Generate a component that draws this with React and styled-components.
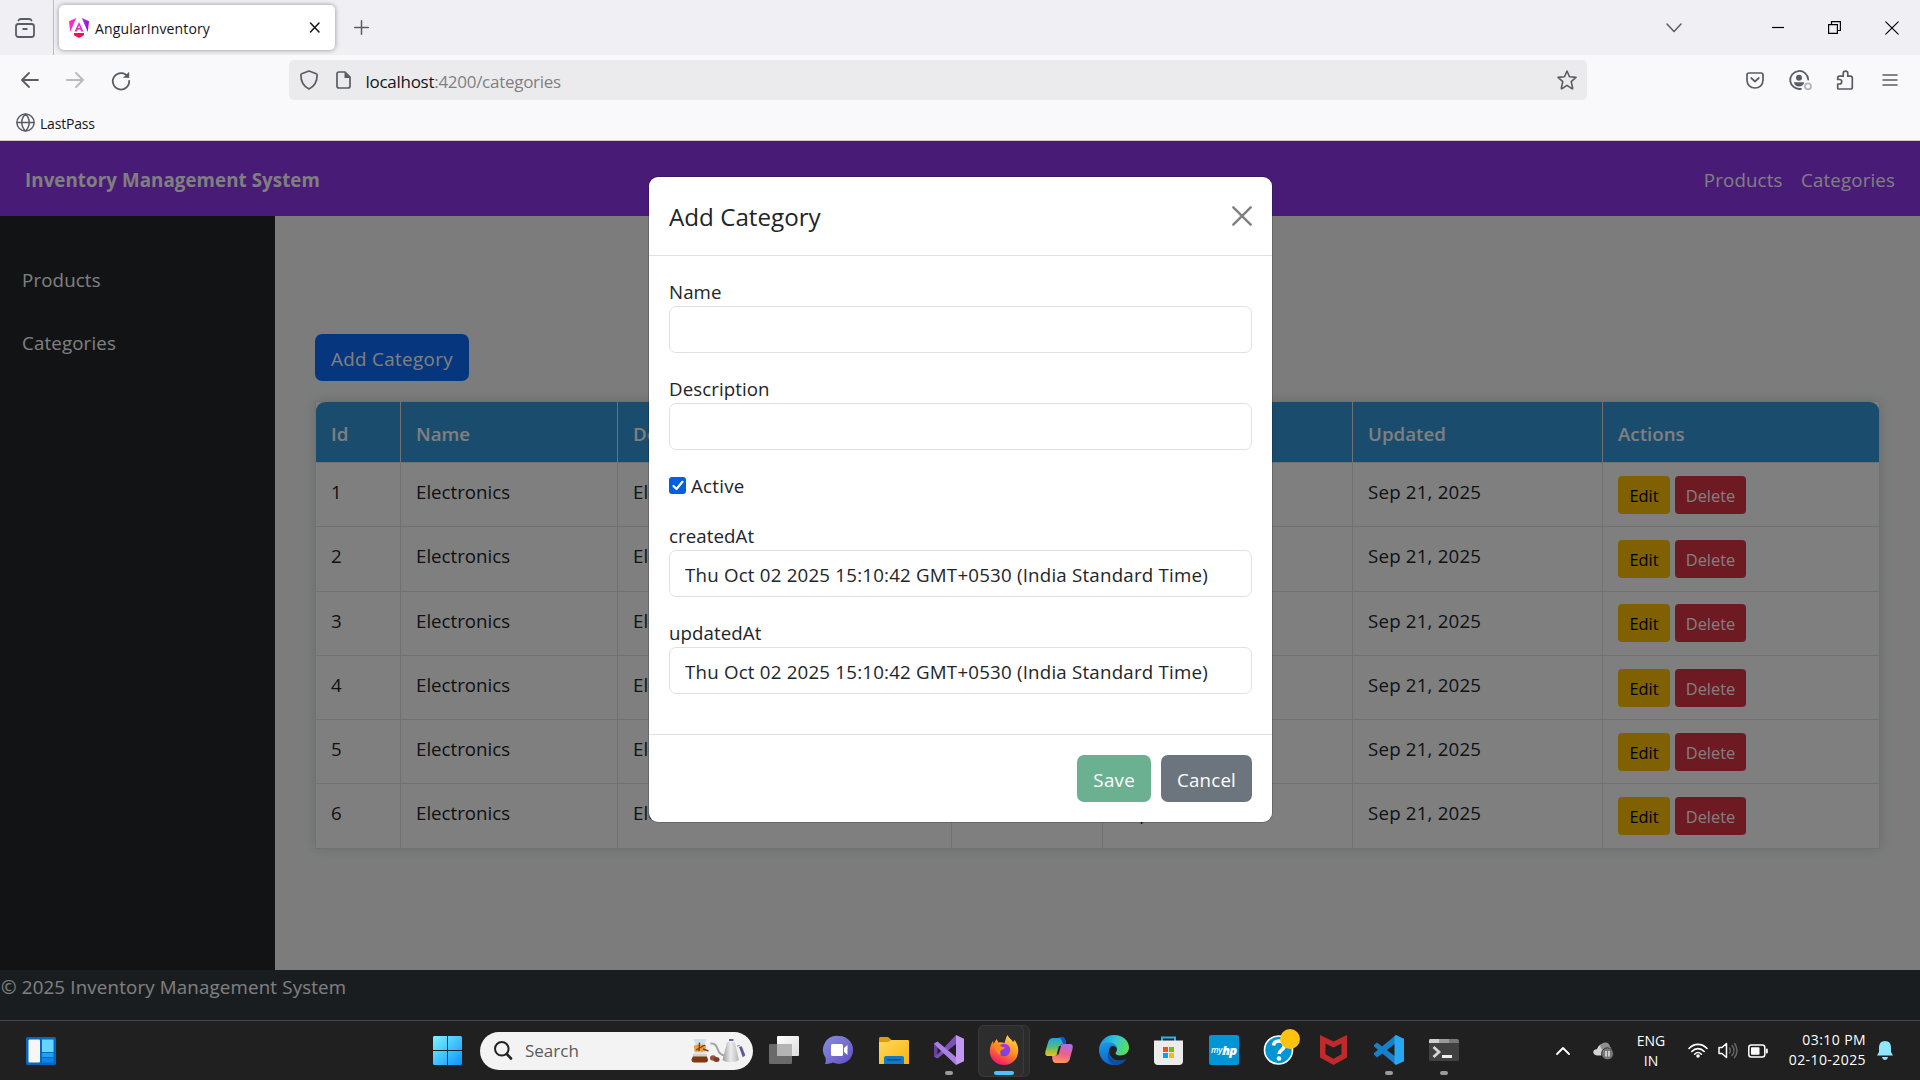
import React from "react";
import styled, { createGlobalStyle } from "styled-components";

const GlobalStyle = createGlobalStyle`
  *, *::before, *::after { box-sizing: border-box; }
  body {
    margin: 0;
    width: 1920px;
    height: 1080px;
    overflow: hidden;
    font-family: "Open Sans", "Noto Sans", sans-serif;
    font-size: 18.7px;
    line-height: 28px;
    color: #212529;
  }
  button, input { font-family: inherit; }
`;

const Screen = styled.div`
  width: 1920px;
  height: 1080px;
  display: flex;
  flex-direction: column;
  overflow: hidden;
`;

/* ---------- Browser chrome ---------- */

const TabStrip = styled.div`
  height: 55px;
  flex: none;
  display: flex;
  align-items: center;
  background: #f0eff4;
  color: #5b5b66;
`;

const TabsOverview = styled.div`
  width: 54px;
  height: 55px;
  padding-right: 3px;
  border-right: 1px solid #bcbbc3;
  display: flex;
  align-items: center;
  justify-content: center;
`;

const Tab = styled.div`
  width: 276px;
  height: 45px;
  margin: 0 19px 0 5px;
  padding: 0 14px 0 10px;
  display: flex;
  align-items: center;
  border-radius: 5px;
  background: #fff;
  box-shadow: 0 0 5px rgba(0, 0, 0, 0.4);
  color: #15141a;
`;

const TabTitle = styled.span`
  flex: 1;
  margin: 2px 0 0 6px;
  font-size: 14px;
  letter-spacing: 0.14px;
  line-height: 20px;
`;

const WindowControls = styled.div`
  display: flex;
  margin-left: auto;
  color: #000;
`;

const ControlCell = styled.div`
  width: ${(p) => p.$width || 57}px;
  margin-right: ${(p) => p.$after || 0}px;
  display: flex;
  align-items: center;
  justify-content: center;
`;

const Toolbar = styled.div`
  height: 50px;
  flex: none;
  display: flex;
  align-items: center;
  padding: 0 8px 0 7px;
  background: #f9f9fb;
  color: #5b5b66;
`;

const ToolCell = styled.div`
  width: 45px;
  height: 40px;
  display: flex;
  align-items: center;
  justify-content: center;
  opacity: ${(p) => (p.$dim ? 0.4 : 1)};
`;

const AddressBar = styled.div`
  width: 1298px;
  height: 40px;
  margin-left: 147px;
  margin-right: auto;
  padding: 0 10px 0 11px;
  display: flex;
  align-items: center;
  gap: 17px;
  border-radius: 5px;
  background: #ebebed;
`;

const Address = styled.span`
  flex: 1;
  margin: 3px 0 0 -4.5px;
  font-size: 17px;
  letter-spacing: -0.28px;
  color: #7f7f85;
  b { font-weight: 400; color: #15141a; }
`;

const Bookmarks = styled.div`
  height: 36px;
  flex: none;
  display: flex;
  align-items: center;
  gap: 5px;
  padding-left: 16px;
  border-bottom: 1px solid #cccccf;
  background: #f9f9fb;
  font-size: 14px;
  letter-spacing: -0.2px;
  line-height: 20px;
  color: #15141a;
`;

const BookmarkLabel = styled.span`
  padding-top: 2px;
`;

/* ---------- Web page ---------- */

const Page = styled.div`
  position: relative;
  height: 879px;
  flex: none;
  display: flex;
  flex-direction: column;
  background: #f8f9fa;
`;

const NavBar = styled.nav`
  height: 75px;
  flex: none;
  padding: 3px 25px 0;
  display: flex;
  align-items: center;
  justify-content: space-between;
  background: #9036ee;
  color: #fff;
`;

const Brand = styled.span`
  font-weight: 700;
  letter-spacing: 0.09px;
`;

const NavLinks = styled.div`
  display: flex;
  gap: 18.5px;
  letter-spacing: 0.15px;
`;

const Middle = styled.div`
  height: 754px;
  flex: none;
  display: flex;
`;

const SideBar = styled.aside`
  width: 275px;
  padding: 50px 22px 0;
  display: flex;
  flex-direction: column;
  gap: 35px;
  background: #232629;
  color: #fff;
  letter-spacing: 0.15px;
`;

const Content = styled.main`
  flex: 1;
  padding: 118px 40px 0;
  display: flex;
  flex-direction: column;
  align-items: flex-start;
`;

const Button = styled.button`
  height: 47px;
  padding: 3px 16px 0;
  border: 0;
  border-radius: 7px;
  font-size: 18.7px;
  letter-spacing: ${(p) => p.$spacing || 0.2}px;
  line-height: 28px;
  color: #fff;
  background: ${(p) => p.$bg};
`;

const Table = styled.div`
  width: 1565px;
  margin-top: 20px;
  border: 1px solid #dee2e6;
  border-bottom: 0;
  background: #fff;
  box-shadow: 0 0 12px rgba(0, 0, 0, 0.14);
`;

const Row = styled.div`
  display: grid;
  grid-template-columns: 85px 217px 334px 151px 250px 250px 1fr;
  height: ${(p) => (p.$head ? 61 : 64.25)}px;
  background: ${(p) => (p.$head ? "#3498db" : "#fff")};
  border-radius: ${(p) => (p.$head ? "9px 9px 0 0" : 0)};
  color: ${(p) => (p.$head ? "#fff" : "#212529")};
  font-weight: ${(p) => (p.$head ? 600 : 400)};
  border-bottom: 1px solid #dee2e6;
`;

const Cell = styled.div`
  padding: ${(p) => p.$top || 15}px 15px 0;
  border-right: 1px solid #dee2e6;
  letter-spacing: ${(p) => p.$spacing || 0}px;
  &:last-child { border-right: 0; }
`;

const Actions = styled.div`
  display: flex;
  gap: 5px;
  padding: 12.75px 15px 0;
`;

const SmallButton = styled.button`
  width: ${(p) => p.$width}px;
  height: 38px;
  padding: 2px 0 0;
  border: 0;
  border-radius: 4px;
  font-size: 16.4px;
  line-height: 26px;
  color: ${(p) => p.$color};
  background: ${(p) => p.$bg};
`;

const PageFooter = styled.footer`
  flex: 1;
  padding: 3px 1px 0;
  background: #343b41;
  color: #fff;
  letter-spacing: 0.18px;
`;

/* ---------- Modal ---------- */

const Backdrop = styled.div`
  position: absolute;
  inset: 0;
  padding: 36px 0 0 649px;
  background: rgba(0, 0, 0, 0.5);
`;

const Dialog = styled.div`
  width: 623px;
  height: 645px;
  display: flex;
  flex-direction: column;
  border-radius: 9px;
  background: #fff;
  box-shadow: 0 0 0 1px rgba(0, 0, 0, 0.175);
`;

const DialogHeader = styled.div`
  height: 79px;
  padding: 0 20px;
  display: flex;
  align-items: center;
  justify-content: space-between;
  border-bottom: 1px solid #dee2e6;
`;

const DialogTitle = styled.h5`
  margin: 0;
  padding-top: 2px;
  font-size: 24.2px;
  line-height: 34px;
  font-weight: 400;
`;

const DialogBody = styled.div`
  flex: 1;
  padding: 22px 20px 0;
`;

const Field = styled.label`
  display: flex;
  flex-direction: column;
  height: ${(p) => (p.$last ? 75 : 97)}px;
  letter-spacing: 0.08px;
`;

const Input = styled.input`
  width: 583px;
  height: 47px;
  padding: 1px 15px 0;
  border: 1px solid #dee2e6;
  border-radius: 7px;
  font-size: 18.7px;
  letter-spacing: 0.215px;
  color: #212529;
  outline: 0;
`;

const CheckRow = styled.label`
  display: flex;
  gap: 5px;
  height: 50px;
  letter-spacing: 0.25px;
`;

const CheckMark = styled.span`
  width: 17px;
  height: 17px;
  margin-top: 5px;
  display: flex;
  align-items: center;
  justify-content: center;
  border-radius: 3px;
  background: #0060df;
`;

const DialogFooter = styled.div`
  height: 88px;
  padding: 0 20px;
  display: flex;
  align-items: center;
  justify-content: flex-end;
  gap: 10px;
  border-top: 1px solid #dee2e6;
`;

/* ---------- Taskbar ---------- */

const TaskBar = styled.div`
  height: 60px;
  flex: none;
  display: flex;
  align-items: center;
  padding-left: 26px;
  border-top: 1px solid #444647;
  background: #202020;
  color: #fff;
`;

const StartButton = styled.div`
  display: flex;
  margin: 0 18px 0 377px;
`;

const SearchBox = styled.div`
  width: 273px;
  height: 38px;
  padding: 0 8px 0 14px;
  display: flex;
  align-items: center;
  border-radius: 19px;
  background: #f3f3f3;
  color: #5a5a5a;
  font-size: 17px;
`;

const SearchLabel = styled.span`
  flex: 1;
  padding: 1px 0 0 13px;
`;

const Apps = styled.div`
  display: flex;
  margin-left: 3px;
`;

const AppSlot = styled.div`
  width: 55px;
  display: flex;
  justify-content: center;
`;

const AppFace = styled.div`
  width: ${(p) => (p.$active ? 44 : 50)}px;
  height: 50px;
  margin-right: ${(p) => (p.$active ? 6 : 0)}px;
  padding: 5px 0 0 ${(p) => (p.$active ? 6 : 0)}px;
  display: flex;
  flex-direction: column;
  align-items: center;
  border-radius: 5px;
  background: ${(p) => (p.$active ? "#2d2d2d" : "transparent")};
  box-shadow: ${(p) => (p.$active ? "0 0 0 1px #3a3a3a, 6px 0 0 0 #2b2b2b, 6px 0 0 1px #363636" : "none")};
`;

const AppIcon = styled.div`
  height: 40px;
  padding-bottom: 1px;
  display: flex;
  align-items: center;
`;

const Indicator = styled.div`
  width: ${(p) => (p.$active ? 20 : 8)}px;
  height: 4px;
  border-radius: 2px;
  background: ${(p) => (p.$active ? "#4cc2ff" : "#9a9a9a")};
`;

const Tray = styled.div`
  margin-left: auto;
  display: flex;
  align-items: center;
  padding-right: 27px;
`;

const TrayText = styled.div`
  width: ${(p) => p.$width}px;
  margin: ${(p) => p.$margin};
  text-align: ${(p) => p.$align};
  font-size: 14px;
  letter-spacing: ${(p) => p.$spacing || 0}px;
  line-height: 20px;
`;

const TrayIcon = styled.div`
  display: flex;
  margin-right: ${(p) => p.$after}px;
`;

/* ---------- Icons ---------- */

const IconFrame = styled.svg`
  display: block;
  flex: none;
  overflow: visible;
`;

const Svg = ({ w = 20, h = w, sw = 1.6, children }) => (
  <IconFrame
    width={w}
    height={h}
    viewBox={`0 0 ${w} ${h}`}
    fill="none"
    stroke="currentColor"
    strokeWidth={sw}
    strokeLinecap="round"
    strokeLinejoin="round"
  >
    {children}
  </IconFrame>
);

const Filled = ({ w = 30, h = w, children }) => (
  <IconFrame width={w} height={h} viewBox={`0 0 ${w} ${h}`}>
    {children}
  </IconFrame>
);

const Grad = ({ id, from, to, mid, x2 = 1, y2 = 1, x1 = 0, y1 = 0 }) => (
  <linearGradient id={id} x1={x1} y1={y1} x2={x2} y2={y2}>
    <stop offset="0" stopColor={from} />
    {mid && <stop offset=".5" stopColor={mid} />}
    <stop offset="1" stopColor={to} />
  </linearGradient>
);

const AngularIcon = () => (
  <Filled w={20}>
    <defs><Grad id="ng" from="#ff2fb0" to="#7a16f5" mid="#f02bd5" y2={0} /></defs>
    <path d="M7.2 0 0 3.2 1.2 14 7.2 0Z M12.8 0 20 3.2 18.8 14 12.8 0Z" fill="url(#ng)" />
    <path d="M10 4 5.6 13.6h2.3l.8-2h2.6l.8 2h2.3L10 4Zm0 3.6 1 2.4H9l1-2.4Z" fill="#ef2bc0" />
    <path d="M5 15h10v2.3L10 20l-5-2.7V15Z" fill="#f5104f" />
  </Filled>
);

const WidgetsIcon = () => (
  <Filled w={30} h={28}>
    <rect width="30" height="28" rx="1.5" fill="#0a66b8" />
    <rect x="2.5" y="2.5" width="11.5" height="23" rx="1" fill="#f6f6f6" />
    <rect x="16" y="2.5" width="11.5" height="12.5" fill="#63d6ff" />
    <rect x="16" y="16" width="11.5" height="4" fill="#1da2f8" />
    <rect x="16" y="21" width="11.5" height="4.5" fill="#0a84ee" />
  </Filled>
);

const WindowsIcon = () => (
  <Filled w={29}>
    <defs>
      <linearGradient id="win" gradientUnits="userSpaceOnUse" x1="0" y1="0" x2="29" y2="29">
        <stop offset="0" stopColor="#7df3ff" />
        <stop offset="1" stopColor="#0a94ff" />
      </linearGradient>
    </defs>
    <path d="M1 0h13v14H0V1Zm14 0h13l1 1v13H15ZM0 15h14v14H1l-1-1Zm15 0h14v13l-1 1H15Z" fill="url(#win)" />
  </Filled>
);

const CoffeeIcon = () => (
  <Filled w={54} h={25}>
    <defs><Grad id="pot" from="#9a9a9a" to="#b5b5b5" mid="#ededed" y2={0} /></defs>
    <path d="M2.5 1h13l-3.5 9 3.5 5.5H2.5L6 10Z" fill="#cfe0ea" />
    <path d="M3 7.5c4-1.5 8-1 12-.5l-.5 6c-4 1-8 1-11 .5Z" fill="#e8a040" />
    <path d="M8.5 4.5 8 13M5 12l9-5m-2 4 5.5 2" stroke="#8a3b12" strokeWidth="1.4" fill="none" />
    <path d="M3 16h12l2 5.5c0 2-1 3-3 3H3.5c-2 0-3-1-3-3Z" fill="#7a3a12" />
    <path d="M2.5 16h13l.6 2.5H1.8Z" fill="#d8cfc8" />
    <ellipse cx="22" cy="20" rx="3" ry="2.8" fill="#9b4f3c" />
    <ellipse cx="25.5" cy="21.5" rx="3" ry="2.5" fill="#7f3a2c" />
    <path d="M19.5 5.5c5-.5 6 2.5 7.5 6.5 1.3 3.5 3 5 6.5 5.5" stroke="#a2a2a2" strokeWidth="2" fill="none" />
    <path d="M36 4.5c2-1.5 6-1.500 8 0l4 17.500c-4 3-13 3-16.500 0Z" fill="url(#pot)" />
    <path d="M46 8l3-.5" stroke="#aaa" strokeWidth="1.5" />
    <path d="M38 1h4.5v2H38Z" fill="#6b63a6" />
    <path d="m48 9 2.800-.8 3.500 9-2.500 2Z" fill="#5f5796" />
  </Filled>
);

const TaskViewIcon = () => (
  <Filled w={30} h={28}>
    <defs><Grad id="tv" from="#ffffff" to="#dcdcdc" /></defs>
    <rect x="8" y="0" width="22" height="20" rx="1" fill="url(#tv)" />
    <rect x="0" y="8" width="23" height="20" rx="1" fill="#6a6a6a" />
    <path d="M8 8h15v12H8Z" fill="#b4b4b4" />
  </Filled>
);

const ChatIcon = () => (
  <Filled w={30} h={28}>
    <defs><Grad id="chat" from="#7e8fe0" to="#5a4fc4" mid="#7a6fd0" /></defs>
    <path d="M15 0a14 14 0 1 1-6 26.600C6 28 3 28 1 28c1-2 .8-4 .6-6A14 14 0 0 1 15 0Z" fill="url(#chat)" />
    <rect x="7" y="8" width="12" height="12" rx="1.5" fill="#fff" />
    <path d="m20 12 3.500-3v10L20 16Z" fill="#fff" />
  </Filled>
);

const FolderIcon = () => (
  <Filled w={30} h={27}>
    <defs><Grad id="fold" from="#ffd95a" to="#f8b312" /></defs>
    <path d="M0 1.500C0 .6.600 0 1.500 0H9l3.500 3H29l1 1v6H0Z" fill="#dd9c0b" />
    <path d="M0 5h9l3.500-2H29l1 1v23H0Z" fill="url(#fold)" />
    <path d="M5 21c0-1.300.8-2 2-2h16c1.300 0 2 .8 2 2v6H5Z" fill="#1279c9" />
    <rect x="8" y="22" width="14" height="1.6" fill="#0a4f94" />
  </Filled>
);

const VisualStudioIcon = () => (
  <Filled w={30}>
    <path d="M0 8.500 3.500 7v16L0 21.500Z" fill="#6a3f9c" />
    <path d="m0 21.500 3.500 2L22 9V0L3 20Z" fill="#7d4fbb" />
    <path d="M0 8.500 3.500 6.500 22 22v8L3.500 12.500Z" fill="#a97fe2" />
    <path d="M22 0 30 3.800v22.400L22 30Z" fill="#c298f0" />
  </Filled>
);

const FirefoxIcon = () => (
  <Filled w={30}>
    <defs>
      <Grad id="fx" from="#ffe14a" mid="#ff8a1f" to="#f5116e" x1={0.8} x2={0.3} />
      <Grad id="fx2" from="#b833e1" to="#5a4be0" x1={1} x2={0} />
    </defs>
    <path d="M18.500 0c1 3 4.500 4.500 5.500 7 1-.5 1.200-1.200 1.500-2 3 4 4.300 8 3.500 13C28 25.500 22 30 15 30 7 30 .8 24 .8 16.500.8 12 2 9 4 6l.5 3L7.500 4l2 3.500c2.500-.5 4.500 0 6 .5 1-3 1.500-6 3-8Z" fill="url(#fx)" />
    <circle cx="15" cy="15" r="6.3" fill="url(#fx2)" />
    <path d="M5.500 10.500c3-1 6-.5 7.500 1.500l3 .3c-.5 2-3 2.200-4.500 3.700-.6 1.500-.2 2.800 1 3.600-3 .6-6-1.500-7-9.100Z" fill="#ff8a1a" />
  </Filled>
);

const CopilotIcon = () => (
  <Filled w={28} h={27}>
    <defs>
      <Grad id="cp1" from="#19a5ef" mid="#58bb7a" to="#f2c40f" x2={0} />
      <Grad id="cp2" from="#b16ce8" mid="#ee5f8d" to="#ff9a55" x1={0.5} x2={0.3} />
    </defs>
    <path d="M8 1h9c2.500 0 3 1.500 3.500 3L21 7h-3c-2 0-2.700 1-3.200 3l-1.500 6c-.8 2-1.500 3-4 3H3c-3 0-3-2.500-2.500-5L3.500 4C4.500 2 6 1 8 1Z" fill="url(#cp1)" />
    <path d="M13 0h4.500c2.500 0 3 2 3.500 7h-3c-1-5-3-6-5-7Z" fill="#1b50c8" />
    <path d="M20 26h-9c-2.500 0-3-1.500-3.500-3L7 19h3c2 0 2.700-1 3.200-3l1.500-6c.8-2 1.500-3 4-3H25c3 0 3 2.500 2.500 5l-3 11C23.500 25 22 26 20 26Z" fill="url(#cp2)" />
    <path d="m16 9-2.500 8.500h-2L14 9Z" fill="#202020" />
  </Filled>
);

const EdgeIcon = () => (
  <Filled w={30}>
    <defs>
      <Grad id="ed1" from="#1d8fe8" to="#5de04f" mid="#36c6d4" y1={0.3} y2={0.6} />
      <Grad id="ed2" from="#1a9de8" to="#0b5ec4" x2={0.5} />
    </defs>
    <path d="M0 14C1 6 7 0 15 0c9 0 15 6 15 12.500 0 5-4 8-9 8-3 0-4.500-1-4.500-2.200 0-1 1.500-1.500 1.500-4C18 11 15 9 11 9 5 9 1 11 0 14Z" fill="url(#ed1)" />
    <path d="M0 14c1-4 5-6.500 10-6.500 4.500 0 8 2.500 8 6.800-.3-2-2-3.300-4-3.300-2 0-4 2-4 5.500 0 6 6 9.500 12 9 2-.2 4-1 5-1.500C24 28 20 30 15 30 6 30-.5 22.500 0 14Z" fill="url(#ed2)" />
    <path d="M10 16c-.5 7 5 10.500 11 10 2.500-.2 5-1.200 6.500-2C24.500 28.500 20 30 16 30 9 28 7.500 21 10 16Z" fill="#0c4f9c" />
  </Filled>
);

const StoreIcon = () => (
  <Filled w={29}>
    <path d="M8 6V1.500h13V6" stroke="#2cb4e8" strokeWidth="2" fill="none" />
    <path d="M0 4.500h29V25c0 2.500-1.500 4-4 4H4c-2.500 0-4-1.500-4-4Z" fill="#ececec" />
    <path d="M9 11h5v5H9Z" fill="#f25022" /><path d="M15 11h5v5h-5Z" fill="#7fba00" />
    <path d="M9 17h5v5H9Z" fill="#00a4ef" /><path d="M15 17h5v5h-5Z" fill="#ffb900" />
  </Filled>
);

const HpTile = styled.div`
  width: 30px;
  height: 30px;
  display: flex;
  align-items: center;
  justify-content: center;
  border-radius: 2px;
  background: #0096d6;
  color: #fff;
  font-size: 8.5px;
  font-weight: 600;
  font-style: italic;
  letter-spacing: -0.3px;
  b { font-size: 13px; letter-spacing: -1px; }
`;

const HelpIcon = () => (
  <Filled w={30}>
    <circle cx="14.5" cy="15" r="14" fill="#0096d6" stroke="#fff" strokeWidth="1.6" />
    <path d="M9.500 10.500c.3-3 2.500-4.500 5.500-4.500 3.200 0 5.300 1.700 5.300 4.500 0 4.500-5.300 4.500-5.300 8.500" stroke="#fff" strokeWidth="3.6" fill="none" />
    <circle cx="15" cy="23.5" r="2.3" fill="#fff" />
    <circle cx="26" cy="4" r="10" fill="#ffc20e" />
  </Filled>
);

const McAfeeIcon = () => (
  <Filled w={27} h={30}>
    <path d="m0 0 13.500 6.500L27 0v22.500L13.500 30 0 22.500Zm5.500 8.500v10.700l8 4.500 8-4.500V8.500l-8 4Z" fill="#c02a2d" fillRule="evenodd" />
  </Filled>
);

const VsCodeIcon = () => (
  <Filled w={30}>
    <path d="M0 10 3 7.500 22 22v8L0 11.500Z" fill="#1c7fc7" />
    <path d="M0 19.500 3 22.500 22 8V0L0 18Z" fill="#1580cc" />
    <path d="M22 0 30 3.800v22.400L22 30l-1.500-1.500v-27Z" fill="#2aa7f2" />
  </Filled>
);

const TerminalIcon = () => (
  <Filled w={30} h={22}>
    <rect width="30" height="22" rx="1.5" fill="#414141" />
    <path d="M0 1.500C0 .6.600 0 1.500 0H10v4H0Z" fill="#cfcfcf" />
    <path d="M10 0h10v4H10Z" fill="#9b9b9b" /><path d="M20 0h8.500l1.500 1.500V4H20Z" fill="#777" />
    <path d="m4.500 8 5.500 5-5.500 5" stroke="#d5d5d5" strokeWidth="2.8" fill="none" />
    <path d="M13 16h10v3H13Z" fill="#eee" />
  </Filled>
);

const apps = [
  { name: "taskview", icon: <TaskViewIcon /> },
  { name: "chat", icon: <ChatIcon /> },
  { name: "files", icon: <FolderIcon /> },
  { name: "vs", icon: <VisualStudioIcon />, running: true },
  { name: "firefox", icon: <FirefoxIcon />, running: true, active: true },
  { name: "copilot", icon: <CopilotIcon /> },
  { name: "edge", icon: <EdgeIcon /> },
  { name: "store", icon: <StoreIcon /> },
  { name: "hp", icon: <HpTile>my<b>hp</b></HpTile> },
  { name: "help", icon: <HelpIcon /> },
  { name: "mcafee", icon: <McAfeeIcon /> },
  { name: "vscode", icon: <VsCodeIcon />, running: true },
  { name: "terminal", icon: <TerminalIcon />, running: true },
];

const ids = [1, 2, 3, 4, 5, 6];
const now = "Thu Oct 02 2025 15:10:42 GMT+0530 (India Standard Time)";

const Browser = () => (
  <>
    <TabStrip>
      <TabsOverview>
        <Svg w={20} h={20} sw={1.8}>
          <rect x="1" y="6" width="18" height="13" rx="2.5" />
          <path d="M3.500 2.500C4 1.300 4.800 1 6 1h8c1.200 0 2 .3 2.500 1.500M8.200 11h3.600" />
        </Svg>
      </TabsOverview>
      <Tab>
        <AngularIcon />
        <TabTitle>AngularInventory</TabTitle>
        <Svg w={12} h={12} sw={1.5}><path d="m1.500 1 8.500 9M10 1 1.500 10" /></Svg>
      </Tab>
      <Svg w={15} h={15} sw={1.5}><path d="M7.500.7v13.600M.7 7.500h13.600" /></Svg>
      <WindowControls>
        <ControlCell $width={28} $after={61}>
          <Svg w={16} h={10} sw={1.5}><path d="m1 1 7 7.500L15 1" stroke="#5b5b66" /></Svg>
        </ControlCell>
        <ControlCell><Svg w={12} h={4} sw={1.2}><path d="M0 1.500h12" strokeLinecap="butt" /></Svg></ControlCell>
        <ControlCell>
          <Svg w={13} h={13} sw={1.2}>
            <path d="M.6 3.600h8.800v8.800H.6ZM3.500 3.500V.6h8.900v8.900H9.500" strokeLinejoin="miter" />
          </Svg>
        </ControlCell>
        <ControlCell><Svg w={14} h={14} sw={1.2}><path d="m.8.800 12.400 12.400M13.200.8.800 13.200" /></Svg></ControlCell>
      </WindowControls>
    </TabStrip>
    <Toolbar>
      <ToolCell><Svg w={18} h={16} sw={1.8}><path d="M17 8H1.500M8 1 1 8l7 7" /></Svg></ToolCell>
      <ToolCell $dim><Svg w={18} h={16} sw={1.8}><path d="M1 8h15.500M10 1l7 7-7 7" /></Svg></ToolCell>
      <ToolCell>
        <Svg w={18} h={19} sw={1.8}>
          <path d="M17 6A8.200 8.200 0 1 0 18.200 9.800" />
          <path d="M12 6.700h6.200V.8Z" fill="currentColor" stroke="none" />
        </Svg>
      </ToolCell>
      <AddressBar>
        <Svg w={18} h={20} sw={1.7}>
          <path d="M9 1 16.300 3.800c.6.200.8.600.8 1.200C17.200 11 15 16 9 19 3 16 .8 11 .9 5c0-.6.200-1 .8-1.200Z" />
        </Svg>
        <Svg w={18} h={18} sw={1.7}>
          <path d="M4 1h6l5 5v9c0 1.200-.8 2-2 2H4c-1.200 0-2-.8-2-2V3c0-1.200.8-2 2-2Z" />
          <path d="M9.500 1v6h6Z" fill="currentColor" stroke="none" />
        </Svg>
        <Address><b>localhost</b>:4200/categories</Address>
        <Svg w={20} h={20} sw={1.6}>
          <path d="m10 1 2.500 5.700 6.500.700-4.800 4.200 1.500 6.500c.1.600-.3.800-.8.500L10 15.300l-4.900 3.300c-.5.300-.9.100-.8-.5l1.500-6.500L1 7.400l6.500-.7Z" />
        </Svg>
      </AddressBar>
      <ToolCell>
        <Svg w={18} h={17} sw={1.7}>
          <path d="M3 1h12c1.200 0 2 .8 2 2v5c0 5-3.500 8-8 8S1 13 1 8V3c0-1.200.8-2 2-2ZM5.200 6 9 9.500 12.800 6" />
        </Svg>
      </ToolCell>
      <ToolCell>
        <Svg w={21} h={20} sw={1.8}>
          <path d="M19.200 9.500A9 9 0 1 0 12 18.800" />
          <circle cx="10" cy="7.7" r="3" fill="currentColor" stroke="none" />
          <path d="M4.800 12.300h10.400c-.8 3-2.500 4.200-5.200 4.200s-4.400-1.200-5.200-4.200Z" fill="currentColor" stroke="none" />
          <circle cx="19" cy="16.3" r="3" stroke="#b5b5bb" />
        </Svg>
      </ToolCell>
      <ToolCell>
        <Svg w={18} h={20} sw={1.7}>
          <path d="M2.500 19h12c1 0 1.800-.7 1.800-1.800V8c0-1-.8-1.800-1.800-1.800h-2.700V3.400c0-3-4.600-3-4.600 0v2.800H3.500C2.300 6.200 1.700 7 1.700 8v1.500h1.800c3 0 3 4.500 0 4.500H1.700v4.200c0 .5.300.8.800.8Z" />
        </Svg>
      </ToolCell>
      <ToolCell><Svg w={16} h={14} sw={1.5}><path d="M1 2h14M1 7h14M1 12h14" /></Svg></ToolCell>
    </Toolbar>
    <Bookmarks>
      <Svg w={19} h={19} sw={1.5}>
        <circle cx="9.5" cy="9.5" r="8.6" stroke="#5b5b66" />
        <path d="M1 9.500h17M9.500 1c-5 5-5 12 0 17M9.500 1c5 5 5 12 0 17" stroke="#5b5b66" />
      </Svg>
      <BookmarkLabel>LastPass</BookmarkLabel>
    </Bookmarks>
  </>
);

const CategoryDialog = () => (
  <Backdrop>
    <Dialog>
      <DialogHeader>
        <DialogTitle>Add Category</DialogTitle>
        <Svg w={20} h={20} sw={2.4}><path d="m1.300 1.300 17.400 17.400M18.700 1.300 1.300 18.700" stroke="#808080" /></Svg>
      </DialogHeader>
      <DialogBody>
        <Field>Name<Input /></Field>
        <Field>Description<Input /></Field>
        <CheckRow>
          <CheckMark><Svg w={12} h={11} sw={2.2}><path d="m1.500 6 3 3L10.500 1.800" stroke="#fff" /></Svg></CheckMark>
          Active
        </CheckRow>
        <Field>createdAt<Input readOnly value={now} /></Field>
        <Field $last>updatedAt<Input readOnly value={now} /></Field>
      </DialogBody>
      <DialogFooter>
        <Button $bg="#6cb092" $spacing={0.3}>Save</Button>
        <Button $bg="#6c757d">Cancel</Button>
      </DialogFooter>
    </Dialog>
  </Backdrop>
);

const InventoryPage = () => (
  <Page>
    <NavBar>
      <Brand>Inventory Management System</Brand>
      <NavLinks><span>Products</span><span>Categories</span></NavLinks>
    </NavBar>
    <Middle>
      <SideBar><span>Products</span><span>Categories</span></SideBar>
      <Content>
        <Button $bg="#0d6efd" $spacing={0.39}>Add Category</Button>
        <Table>
          <Row $head>
            {["Id", "Name", "Description", "Active", "Created", "Updated", "Actions"].map((h) => (
              <Cell key={h} $top={18}>{h}</Cell>
            ))}
          </Row>
          {ids.map((id) => (
            <Row key={id}>
              <Cell>{id}</Cell>
              <Cell>Electronics</Cell>
              <Cell>Electronics</Cell>
              <Cell>true</Cell>
              <Cell $spacing={0.2}>Sep 21, 2025</Cell>
              <Cell $spacing={0.2}>Sep 21, 2025</Cell>
              <Actions>
                <SmallButton $width={52} $bg="#ffc107" $color="#000">Edit</SmallButton>
                <SmallButton $width={71} $bg="#dc3545" $color="#fff">Delete</SmallButton>
              </Actions>
            </Row>
          ))}
        </Table>
      </Content>
    </Middle>
    <PageFooter>© 2025 Inventory Management System</PageFooter>
    <CategoryDialog />
  </Page>
);

const WindowsTaskBar = () => (
  <TaskBar>
    <WidgetsIcon />
    <StartButton><WindowsIcon /></StartButton>
    <SearchBox>
      <Svg w={18} h={19} sw={2}><circle cx="7.8" cy="7.8" r="6.8" stroke="#222" /><path d="m12.800 13 4.200 4.500" stroke="#222" strokeWidth="2.6" /></Svg>
      <SearchLabel>Search</SearchLabel>
      <CoffeeIcon />
    </SearchBox>
    <Apps>
      {apps.map((a) => (
        <AppSlot key={a.name}>
          <AppFace $active={a.active}>
            <AppIcon>{a.icon}</AppIcon>
            {a.running && <Indicator $active={a.active} />}
          </AppFace>
        </AppSlot>
      ))}
    </Apps>
    <Tray>
      <TrayIcon $after={23}><Svg w={14} h={8} sw={1.8}><path d="m1 7 6-6 6 6" /></Svg></TrayIcon>
      <TrayIcon $after={17}>
        <Filled w={21} h={18}>
          <path d="M4 13.500c-5-1-5-6 0-6.500C6 1 13 0 15.500 4.500c3 .5 4 4 2.500 6L8 13.500Z" fill="#d2d2d2" />
          <path d="M7 4c2-5 10-5 10 1.500L9 8Z" fill="#8f8f8f" />
          <circle cx="14.5" cy="11.8" r="6" fill="#777" stroke="#202020" strokeWidth=".8" />
          <path d="M13 9v5.500M16 9v5.500" stroke="#eee" strokeWidth="1.4" />
        </Filled>
      </TrayIcon>
      <TrayText $width={40} $align="center" $margin="0 17px 0 0">ENG<br />IN</TrayText>
      <TrayIcon $after={10}>
        <Svg w={20} h={15} sw={1.6}>
          <path d="M1 5.500c5-5.500 13-5.500 18 0M3.800 8.500c3.500-3.800 8.900-3.800 12.400 0M6.600 11.200c2-2 4.800-2 6.800 0" />
          <circle cx="10" cy="13" r="1.8" fill="#fff" stroke="none" />
        </Svg>
      </TrayIcon>
      <TrayIcon $after={10}>
        <Svg w={20} h={17} sw={1.5}>
          <path d="M1 5.500h3l4.500-4v14l-4.500-4H1Z" />
          <path d="M11.500 6c1 1.500 1 3.500 0 5M14 3.500c2.500 3 2.500 7 0 10M16.500 1.500c3.300 4 3.300 10 0 14" stroke="#666" />
        </Svg>
      </TrayIcon>
      <TrayIcon $after={8}>
        <Svg w={20} h={14} sw={1.5}>
          <rect x=".8" y="1" width="16" height="12" rx="2.5" />
          <rect x="3" y="3.2" width="8.5" height="7.6" rx=".8" fill="#fff" stroke="none" />
          <path d="M18.800 5.500v3" strokeWidth="2" />
        </Svg>
      </TrayIcon>
      <TrayText $width={90} $align="right" $margin="-2px 11px 0 0" $spacing={0.42}>03:10 PM<br />02-10-2025</TrayText>
      <Filled w={16} h={19}>
        <path d="M8 0c4 0 6 2.800 6 6.500V11l2 3.500H0L2 11V6.500C2 2.800 4 0 8 0Z" fill="#8fe6ff" />
        <path d="M5 16h6c-.5 2-1.500 3-3 3s-2.500-1-3-3Z" fill="#8fe6ff" />
      </Filled>
    </Tray>
  </TaskBar>
);

export default function App() {
  return (
    <Screen>
      <GlobalStyle />
      <Browser />
      <InventoryPage />
      <WindowsTaskBar />
    </Screen>
  );
}
